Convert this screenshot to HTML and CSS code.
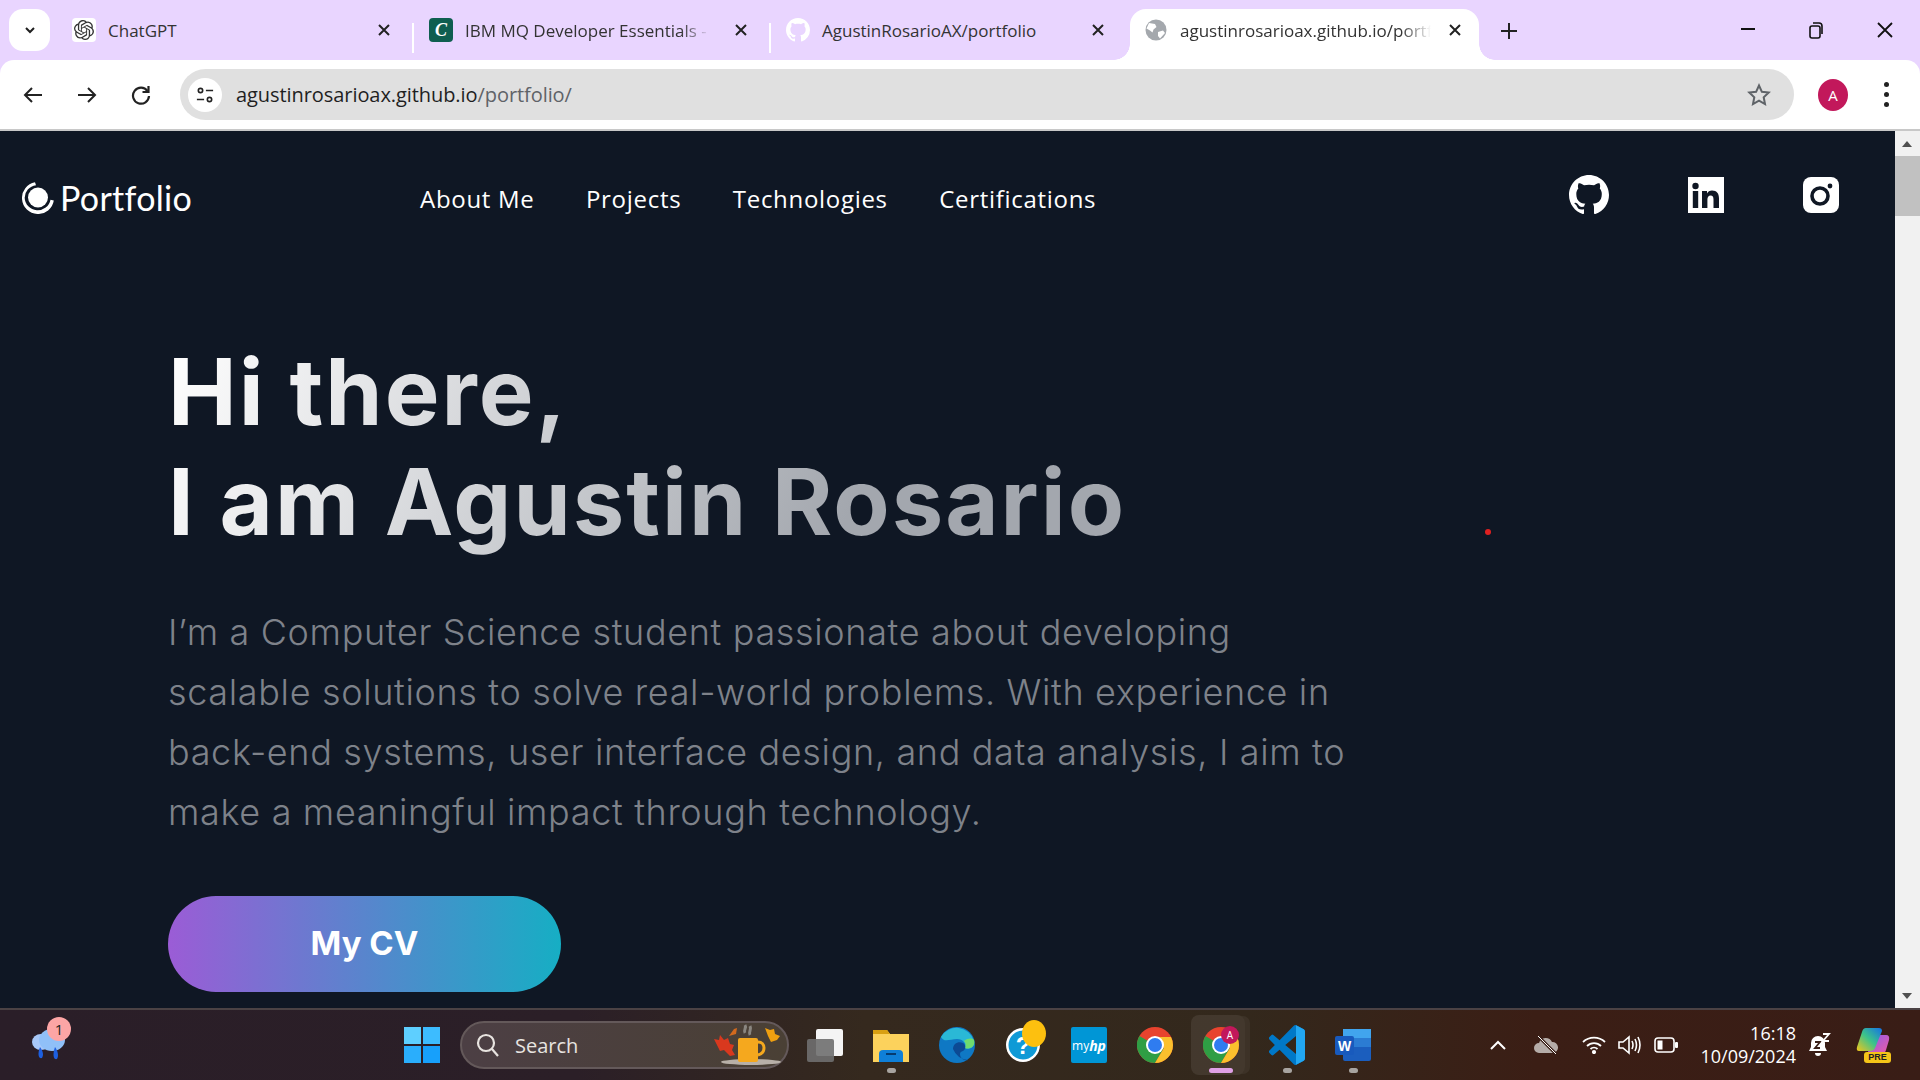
FILE: index.html
```html
<!DOCTYPE html>
<html lang="en">
<head>
<meta charset="utf-8">
<title>Portfolio</title>
<link rel="stylesheet" href="styles.css">
</head>
<body>
<div class="tabstrip">
  <button class="collapse"><svg width="14" height="14" viewBox="0 0 14 14"><path d="M3 5l4 4 4-4" fill="none" stroke="#1f1f1f" stroke-width="2"/></svg></button>
  <div class="tab t1">
    <span class="fav white"><svg width="20" height="20" viewBox="0 0 24 24" fill="#333"><path d="M22.2819 9.8211a5.9847 5.9847 0 0 0-.5157-4.9108 6.0462 6.0462 0 0 0-6.5098-2.9A6.0651 6.0651 0 0 0 4.9807 4.1818a5.9847 5.9847 0 0 0-3.9977 2.9 6.0462 6.0462 0 0 0 .7427 7.0966 5.98 5.98 0 0 0 .511 4.9107 6.051 6.051 0 0 0 6.5146 2.9001A5.9847 5.9847 0 0 0 13.2599 24a6.0557 6.0557 0 0 0 5.7718-4.2058 5.9894 5.9894 0 0 0 3.9977-2.9001 6.0557 6.0557 0 0 0-.7475-7.0729zm-9.022 12.6081a4.4755 4.4755 0 0 1-2.8764-1.0408l.1419-.0804 4.7783-2.7582a.7948.7948 0 0 0 .3927-.6813v-6.7369l2.02 1.1686a.071.071 0 0 1 .038.052v5.5826a4.504 4.504 0 0 1-4.4945 4.4944zm-9.6607-4.1254a4.4708 4.4708 0 0 1-.5346-3.0137l.142.0852 4.783 2.7582a.7712.7712 0 0 0 .7806 0l5.8428-3.3685v2.3324a.0804.0804 0 0 1-.0332.0615L9.74 19.9502a4.4992 4.4992 0 0 1-6.1408-1.6464zM2.3408 7.8956a4.485 4.485 0 0 1 2.3655-1.9728V11.6a.7664.7664 0 0 0 .3879.6765l5.8144 3.3543-2.0201 1.1685a.0757.0757 0 0 1-.071 0l-4.8303-2.7865A4.504 4.504 0 0 1 2.3408 7.872zm16.5963 3.8558L13.1038 8.364 15.1192 7.2a.0757.0757 0 0 1 .071 0l4.8303 2.7913a4.4944 4.4944 0 0 1-.6765 8.1042v-5.6772a.79.79 0 0 0-.407-.667zm2.0107-3.0231l-.142-.0852-4.7735-2.7818a.7759.7759 0 0 0-.7854 0L9.409 9.2297V6.8974a.0662.0662 0 0 1 .0284-.0615l4.8303-2.7866a4.4992 4.4992 0 0 1 6.6802 4.66zM8.3065 12.863l-2.02-1.1638a.0804.0804 0 0 1-.038-.0567V6.0742a4.4992 4.4992 0 0 1 7.3757-3.4537l-.142.0805L8.704 5.459a.7948.7948 0 0 0-.3927.6813zm1.0976-2.3654l2.602-1.4998 2.6069 1.4998v2.9994l-2.5974 1.4997-2.6067-1.4997Z"/></svg></span>
    <span class="tab-title">ChatGPT</span>
    <svg class="x" width="12" height="12" viewBox="0 0 12 12"><path d="M1 1l10 10M11 1L1 11" stroke="#222" stroke-width="2"/></svg>
  </div>
  <i class="sep"></i>
  <div class="tab t2">
    <span class="fav green"><span class="c">C</span></span>
    <span class="tab-title fade">IBM MQ Developer Essentials -</span>
    <svg class="x" width="12" height="12" viewBox="0 0 12 12"><path d="M1 1l10 10M11 1L1 11" stroke="#222" stroke-width="2"/></svg>
  </div>
  <i class="sep"></i>
  <div class="tab t3">
    <svg class="fav" width="24" height="24" viewBox="0 0 16 16" fill="#fff"><path d="M8 0C3.58 0 0 3.58 0 8c0 3.54 2.29 6.53 5.47 7.59.4.07.55-.17.55-.38 0-.19-.01-.82-.01-1.49-2.01.37-2.53-.49-2.69-.94-.09-.23-.48-.94-.82-1.13-.28-.15-.68-.52-.01-.53.63-.01 1.08.58 1.23.82.72 1.21 1.87.87 2.33.66.07-.52.28-.87.51-1.07-1.78-.2-3.64-.89-3.64-3.95 0-.87.31-1.59.82-2.15-.08-.2-.36-1.02.08-2.12 0 0 .67-.21 2.2.82.64-.18 1.32-.27 2-.27s1.36.09 2 .27c1.53-1.04 2.2-.82 2.2-.82.44 1.1.16 1.92.08 2.12.51.56.82 1.27.82 2.15 0 3.07-1.87 3.75-3.65 3.95.29.25.54.73.54 1.48 0 1.07-.01 1.93-.01 2.2 0 .21.15.46.55.38A8.01 8.01 0 0 0 16 8c0-4.42-3.58-8-8-8z"/></svg>
    <span class="tab-title">AgustinRosarioAX/portfolio</span>
    <svg class="x" width="12" height="12" viewBox="0 0 12 12"><path d="M1 1l10 10M11 1L1 11" stroke="#222" stroke-width="2"/></svg>
  </div>
  <div class="tab active">
    <svg class="fav" width="24" height="24" viewBox="0 0 24 24"><circle cx="12" cy="12" r="10.5" fill="#a4a8ad"/><path d="M5 5l6 1 1.500 3-3 2.500-1 3-2.500-2-3.500-2zM14 14l5-1.500 2 2.500-5 5.500-2-2.500z" fill="#fff"/></svg>
    <span class="tab-title fade-w">agustinrosarioax.github.io/portf</span>
    <svg class="x" width="12" height="12" viewBox="0 0 12 12"><path d="M1 1l10 10M11 1L1 11" stroke="#222" stroke-width="2"/></svg>
  </div>
  <svg class="plus" width="16" height="16" viewBox="0 0 16 16"><path d="M8 0v16M0 8h16" stroke="#222" stroke-width="2"/></svg>
  <div class="winctl">
    <svg width="16" height="16" viewBox="0 0 16 16"><path d="M1 7h14" stroke="#111" stroke-width="2"/></svg>
    <svg width="16" height="18" viewBox="0 0 16 18" fill="none" stroke="#111" stroke-width="1.600"><rect x="2" y="5" width="10" height="12" rx="2"/><path d="M5 2h6a3 3 0 0 1 3 3v8"/></svg>
    <svg width="18" height="18" viewBox="0 0 18 18"><path d="M2 2l14 14M16 2L2 16" stroke="#111" stroke-width="1.800"/></svg>
  </div>
</div>
<div class="toolbar">
  <svg class="nav-ic" width="20" height="20" viewBox="0 0 20 20" fill="none" stroke="#222" stroke-width="2"><path d="M19 10H2M9 3l-7 7 7 7"/></svg>
  <svg class="nav-ic" width="20" height="20" viewBox="0 0 20 20" fill="none" stroke="#222" stroke-width="2"><path d="M1 10h17M11 3l7 7-7 7"/></svg>
  <svg class="nav-ic" width="20" height="20" viewBox="0 0 20 20" fill="none" stroke="#222" stroke-width="2.200"><path d="M16.500 6A8 8 0 1 0 18 11"/><path d="M17.500 1v6h-6" /></svg>
  <div class="omnibox">
    <span class="site-ic"><svg width="20" height="20" viewBox="0 0 20 20" fill="none" stroke="#222" stroke-width="1.800"><circle cx="5" cy="5" r="2.400"/><path d="M11 5h8M1 15h8"/><circle cx="15" cy="15" r="2.400"/></svg></span>
    <span class="url">agustinrosarioax.github.io<span class="url-path">/portfolio/</span></span>
    <svg class="star" width="24" height="24" viewBox="0 0 24 24" fill="none" stroke="#5f6368" stroke-width="2"><path d="M12 2.500l2.900 6.300 6.800.8-5 4.700 1.300 6.800-6-3.400-6 3.400 1.300-6.800-5-4.700 6.800-.8z"/></svg>
  </div>
  <span class="avatar">A</span>
  <span class="dots"><i></i><i></i><i></i></span>
</div>
<div class="viewport">
  <main class="page">
    <header class="topnav">
      <a class="logo">
        <svg width="32" height="32" viewBox="0 0 32 32"><path d="M13 .3A16 16 0 1 0 31.800 18.500l-3.300-.7A13 12.500 0 1 1 14 3.300z" fill="#fff"/><circle cx="16" cy="15.500" r="10" fill="#fff"/></svg>
        <span>Portfolio</span>
      </a>
      <nav class="links">
        <a>About Me</a>
        <a>Projects</a>
        <a>Technologies</a>
        <a>Certifications</a>
      </nav>
      <div class="socials">
        <svg width="40" height="40" viewBox="0 0 16 16" fill="#fff"><path d="M8 0C3.58 0 0 3.58 0 8c0 3.540 2.290 6.530 5.470 7.590.4.070.55-.17.55-.38 0-.19-.01-.82-.01-1.490-2.010.37-2.530-.49-2.690-.94-.09-.23-.48-.94-.82-1.130-.28-.15-.68-.52-.01-.53.63-.01 1.080.58 1.230.82.72 1.210 1.870.87 2.330.66.07-.52.28-.87.51-1.070-1.780-.2-3.640-.89-3.640-3.950 0-.87.31-1.590.82-2.150-.08-.2-.36-1.020.08-2.120 0 0 .67-.21 2.200.82.64-.18 1.320-.27 2-.27s1.360.09 2 .27c1.530-1.040 2.200-.82 2.200-.82.44 1.100.16 1.920.08 2.120.51.56.82 1.270.82 2.150 0 3.070-1.870 3.750-3.650 3.950.29.25.54.73.54 1.480 0 1.070-.01 1.930-.01 2.200 0 .21.15.46.55.38A8.010 8.010 0 0 0 16 8c0-4.420-3.580-8-8-8z"/></svg>
        <svg width="36" height="36" viewBox="0 0 36 36"><rect width="36" height="36" fill="#fff"/><circle cx="7.500" cy="9" r="3.200" fill="#0f1724"/><rect x="4.800" y="14" width="5.400" height="17" fill="#0f1724"/><path d="M14 14h5v2.400c1-1.700 2.700-2.800 5-2.800 5 0 7 3 7 8v9.400h-5.500v-8.500c0-2.400-.8-4-2.900-4-2.200 0-3.200 1.700-3.200 4v8.500H14z" fill="#0f1724"/></svg>
        <svg width="36" height="36" viewBox="0 0 36 36"><rect width="36" height="36" rx="8" fill="#fff"/><circle cx="17" cy="19" r="8" fill="none" stroke="#0f1724" stroke-width="3.600"/><circle cx="27" cy="9" r="2.400" fill="#0f1724"/></svg>
      </div>
    </header>
    <section class="hero">
      <h1 class="title">Hi there,<br>I am Agustin Rosario</h1>
      <p class="lead">I’m a Computer Science student passionate about developing scalable solutions to solve real-world problems. With experience in back-end systems, user interface design, and data analysis, I aim to make a meaningful impact through technology.</p>
      <a class="cv">My CV</a>
    </section>
    <i class="red-dot"></i>
  </main>
  <aside class="scrollbar">
    <span class="arrow up"></span>
    <span class="thumb"></span>
    <span class="track"></span>
    <span class="arrow down"></span>
  </aside>
</div>
<footer class="taskbar">
  <div class="weather">
    <svg width="38" height="34" viewBox="0 0 38 34"><ellipse cx="11" cy="14" rx="9" ry="8" fill="#a8c8f8"/><ellipse cx="22" cy="12" rx="13" ry="11" fill="#90c0f8"/><path d="M10 19c3 4 4 8 2 11-3 1-5-3-2-11zM25 19c3 4 4 9 2 12-3 1-5-3-2-12z" fill="#1d5fe0"/></svg>
    <span class="badge">1</span>
  </div>
  <div class="center">
    <svg class="win" width="36" height="36" viewBox="0 0 36 36"><rect width="17" height="17" fill="#5ecfff"/><rect x="19" width="17" height="17" fill="#3dbcff"/><rect y="19" width="17" height="17" fill="#2aaefc"/><rect x="19" y="19" width="17" height="17" fill="#17a0fb"/></svg>
    <div class="search">
      <svg width="24" height="24" viewBox="0 0 24 24" fill="none" stroke="#e8e4e0" stroke-width="2.200"><circle cx="10" cy="10" r="8"/><path d="M16 16l6 7"/></svg>
      <span class="search-text">Search</span>
      <svg class="cup" width="68" height="44" viewBox="0 0 68 44"><ellipse cx="38" cy="39" rx="30" ry="3" fill="#b8b0a8"/><path d="M1 16l5 1 1-5 4 5 4-2 2 6 4 1-2 5 3 5-5 1-6-6-4 1z" fill="#d9381e"/><rect x="25" y="15" width="20" height="24" rx="2" fill="#f5a81e"/><path d="M45 19c8 0 8 11 0 13" fill="none" stroke="#f5a81e" stroke-width="3"/><path d="M52 5l5 2 4-1 1 5 5 2-3 4-6 2-3-6z" fill="#f0a010"/><path d="M16 13l5-7 3-1-1 6z" fill="#d2691e"/><path d="M32 2c2 3-2 5 0 8M37 3c2 4-2 6 0 9" stroke="#8a8680" stroke-width="3" fill="none"/></svg>
    </div>
    <div class="apps">
      <span class="app"><svg width="36" height="34" viewBox="0 0 36 34"><rect x="9" y="1" width="27" height="27" rx="2" fill="#f4f4f4"/><rect y="11" width="27" height="23" rx="2" fill="#6f6f6f" fill-opacity=".9"/></svg></span>
      <span class="app running"><svg width="36" height="34" viewBox="0 0 36 34"><path d="M0 2h14l3 4h19v28H0z" fill="#fcd25c"/><path d="M0 2h14l3 4H0z" fill="#d9a012"/><path d="M6 26q0-4 4-4h16q4 0 4 4v8H6z" fill="#0f7fd8"/><path d="M13 26h10" stroke="#063b70" stroke-width="2"/></svg></span>
      <span class="app"><svg width="36" height="40" viewBox="0 0 36 40"><circle cx="18" cy="20" r="18" fill="#0f78c4"/><path d="M2 12A18 18 0 0 1 35 16c1 7-5 9-9 7 2-4-2-9-8-9-7 0-13 4-16-2z" fill="#2ab8d6"/><path d="M35 15c2 7-5 10-9 8 1-3 1-5-1-7 4-3 8-3 10-1z" fill="#6fdc6f"/><path d="M14 24c0-5 5-8 10-6 3 2 3 6 0 8-2 1-3 1-3 3 0 4 4 7 8 6A18 18 0 0 1 14 24z" fill="#0c4a94"/></svg></span>
      <span class="app help"><svg width="36" height="36" viewBox="0 0 36 36"><circle cx="18" cy="18" r="17" fill="#fff"/><circle cx="18" cy="18" r="14.500" fill="#0f9ad6"/><text class="help-q" x="18" y="27" text-anchor="middle">?</text></svg><i class="help-dot"></i></span>
      <span class="app"><span class="hp">my<b>hp</b></span></span>
      <span class="app"><svg width="36" height="40" viewBox="0 -2 36 40"><use href="#chrome"/></svg></span>
      <span class="app active-app"><svg width="36" height="40" viewBox="0 -2 36 40"><use href="#chrome"/></svg><i class="prof">A</i></span>
      <span class="app running"><svg width="36" height="40" viewBox="0 0 24 24" preserveAspectRatio="none"><path d="M23.150 2.587L18.210.21a1.494 1.494 0 0 0-1.705.29l-9.460 8.630-4.120-3.128a.999.999 0 0 0-1.276.057L.327 7.261A1 1 0 0 0 .326 8.740L3.899 12 .326 15.260a1 1 0 0 0 .001 1.479L1.650 17.940a.999.999 0 0 0 1.276.057l4.120-3.128 9.460 8.630a1.492 1.492 0 0 0 1.704.29l4.942-2.377A1.500 1.500 0 0 0 24 20.060V3.939a1.500 1.500 0 0 0-.85-1.352zm-5.146 14.861L10.826 12l7.178-5.448v10.896z" fill="#0078c8"/><path d="M18 .1l5.150 2.487A1.500 1.500 0 0 1 24 3.939V20.060a1.500 1.500 0 0 1-.85 1.352L18 23.900z" fill="#22a7f2"/></svg></span>
      <span class="app running"><svg width="36" height="36" viewBox="0 0 36 36"><rect x="8" y="2" width="28" height="32" rx="2" fill="#1b5ebe"/><rect x="8" y="2" width="28" height="9" fill="#41a5ee"/><rect x="8" y="11" width="28" height="9" fill="#2b7cd3"/><rect x="0" y="9" width="19" height="19" rx="2" fill="#185abd"/><text class="word-w" x="9.500" y="24" text-anchor="middle">W</text></svg></span>
    </div>
  </div>
  <div class="tray">
    <svg width="16" height="10" viewBox="0 0 16 10" fill="none" stroke="#fff" stroke-width="2"><path d="M1 9l7-7 7 7"/></svg>
    <svg class="cloud" width="24" height="20" viewBox="0 0 24 20"><path d="M5 18a5 5 0 0 1 0-10 7 7 0 0 1 13-1 5.500 5.500 0 0 1 1 11z" fill="#b5aca8"/><path d="M4 1l18 18" stroke="#3a1f17" stroke-width="3"/><path d="M4 1l18 18" stroke="#fff" stroke-width="1"/></svg>
    <svg class="wifi" width="24" height="18" viewBox="0 0 24 18" fill="none" stroke="#fff" stroke-width="1.800"><path d="M1 6a16 16 0 0 1 22 0M5 10a10 10 0 0 1 14 0M8.500 13a5 5 0 0 1 7 0"/><circle cx="12" cy="16" r="1.200" fill="#fff"/></svg>
    <svg class="vol" width="24" height="20" viewBox="0 0 24 20" fill="none" stroke="#fff" stroke-width="1.600"><path d="M1 7h4l6-5v16l-6-5H1zM14 6q2 4 0 8M17 4q3 6 0 12M20 2q4 8 0 16"/></svg>
    <svg class="batt" width="24" height="16" viewBox="0 0 24 16"><rect x="1" y="1" width="19" height="14" rx="3" fill="none" stroke="#fff" stroke-width="1.600"/><rect x="3.500" y="3.500" width="5" height="9" fill="#fff"/><rect x="21" y="5" width="3" height="6" rx="1" fill="#fff"/></svg>
    <div class="clock"><span>16:18</span><span>10/09/2024</span></div>
    <svg class="bell" width="22" height="24" viewBox="0 0 22 24"><path d="M9 3a7 7 0 0 1 7 7v4l2 4H0l2-4v-4a7 7 0 0 1 7-7z" fill="#fff"/><path d="M6 20h6a3 3 0 0 1-6 0z" fill="#fff"/><path d="M6 9h5l-5 6h5" stroke="#3a1f17" stroke-width="1.800" fill="none"/><path d="M14 1h6l-6 7h6" stroke="#fff" stroke-width="1.800" fill="none"/></svg>
    <span class="copilot"><svg width="34" height="28" viewBox="0 0 34 28"><defs><linearGradient id="cpa" x1="0" y1="1" x2="1" y2="0"><stop offset="0" stop-color="#f5c518"/><stop offset=".5" stop-color="#3cc48a"/><stop offset="1" stop-color="#1470e8"/></linearGradient><linearGradient id="cpb" x1="0" y1="0" x2="1" y2="1"><stop offset="0" stop-color="#8a5cf0"/><stop offset="1" stop-color="#f05ca0"/></linearGradient></defs><path d="M13 8h17q4 0 3 5l-3 10q-1 4-5 4H12z" fill="url(#cpb)"/><path d="M10 1h13q3 0 3 3l-7 17q-1 3-5 3H3q-3 0-2-4L6 5q1-4 4-4z" fill="url(#cpa)"/></svg><b class="pre">PRE</b></span>
  </div>
</footer>
<svg class="defs" width="0" height="0"><defs><g id="chrome"><circle cx="18" cy="18" r="18" fill="#e8432e"/><path d="M18 18L2.400 9A18 18 0 0 0 18 36l9-15z" fill="#2f9e44"/><path d="M18 10h16a18 18 0 0 1 2 8 18 18 0 0 1-18 18l9-15z" fill="#fbc02d"/><circle cx="18" cy="18" r="9" fill="#fff"/><circle cx="18" cy="18" r="7" fill="#2f7cf0"/></g></defs></svg>
</body>
</html>
```
FILE: styles.css
```css
* { box-sizing: border-box; }
html, body { margin: 0; height: 100%; overflow: hidden; }
body { display: flex; flex-direction: column; width: 1920px; height: 1080px; background: #e9d5ff; font-family: "Open Sans", "Liberation Sans", sans-serif; }
a { color: inherit; text-decoration: none; }
i { font-style: normal; display: block; }

.tabstrip { height: 60px; flex: none; background: #e9d5ff; display: flex; align-items: flex-start; }
.collapse { width: 41px; height: 42px; margin: 9px 14px 0 9px; border: 0; padding: 0; border-radius: 14px; background: #fff; display: flex; align-items: center; justify-content: center; }
.tab { height: 51px; margin-top: 9px; display: flex; align-items: center; position: relative; padding-bottom: 9px; flex: none; }
.t1 { width: 348px; padding-left: 8px; }
.t2 { width: 355px; padding-left: 15px; }
.t3 { width: 359px; padding-left: 15px; }
.t1 .x { margin-left: auto; margin-right: 22px; }
.t2 .x { margin-left: auto; margin-right: 22px; }
.t3 .x { margin-left: auto; margin-right: 26px; }
.fav { width: 24px; height: 24px; flex: none; display: flex; align-items: center; justify-content: center; border-radius: 4px; }
.fav.white { background: #fff; }
.fav.green { background: #0f5e50; }
.c { color: #fff; font: italic 700 18px "Liberation Serif", serif; }
.tab-title { font-size: 17px; color: #333; margin-left: 12px; white-space: nowrap; }
.fade { width: 245px; -webkit-mask-image: linear-gradient(90deg, #000 88%, transparent); mask-image: linear-gradient(90deg, #000 88%, transparent); }
.fade-w { width: 251px; -webkit-mask-image: linear-gradient(90deg, #000 88%, transparent); mask-image: linear-gradient(90deg, #000 88%, transparent); }
.sep { width: 2px; height: 30px; margin-top: 23px; background: #fff; flex: none; }
.tab.active { width: 349px; height: 51px; background: #fff; border-radius: 16px 16px 0 0; padding-left: 14px; }
.tab.active::before, .tab.active::after { content: ""; position: absolute; bottom: 0; width: 16px; height: 16px; }
.tab.active::before { left: -16px; background: radial-gradient(circle at 0 0, #e9d5ff 15.500px, #fff 16px); }
.tab.active::after { right: -16px; background: radial-gradient(circle at 100% 0, #e9d5ff 15.500px, #fff 16px); }
.tab.active .x { margin-left: auto; margin-right: 18px; }
.plus { margin: 23px 0 0 22px; flex: none; }
.winctl { margin-left: auto; margin-top: 21px; width: 154px; margin-right: 26px; display: flex; align-items: center; justify-content: space-between; }

.toolbar { height: 71px; flex: none; background: #fff; border-bottom: 2px solid #c8c8c8; display: flex; align-items: center; padding-left: 23px; border-radius: 14px 14px 0 0; }
.nav-ic { margin-right: 34px; flex: none; }
.omnibox { width: 1614px; height: 51px; margin-left: -5px; border-radius: 26px; background: #e0e0e0; display: flex; align-items: center; padding: 0 23px 0 8px; flex: none; }
.site-ic { width: 34px; height: 34px; border-radius: 50%; background: #fff; display: flex; align-items: center; justify-content: center; }
.site-ic svg { width: 18px; height: 18px; }
.url { margin-left: 14px; font-size: 20px; letter-spacing: -.07px; color: #1f1f1f; }
.url-path { color: #5f6368; }
.star { margin-left: auto; }
.avatar { width: 30px; height: 32px; margin-left: 24px; border-radius: 50%; background: #c2185b; color: #fff; font-size: 15px; display: flex; align-items: center; justify-content: center; flex: none; }
.dots { margin-left: 36px; display: flex; flex-direction: column; gap: 5px; }
.dots i { width: 5px; height: 5px; border-radius: 50%; background: #222; }

.viewport { flex: 1; min-height: 0; display: flex; }
.page { flex: 1; background: #0f1724; color: #fff; position: relative; font-family: "Inter", sans-serif; overflow: hidden; }
.topnav { height: 134px; display: flex; align-items: center; padding-left: 22px; }
.logo { width: 398px; display: flex; align-items: center; gap: 6px; font-family: "Lato", sans-serif; font-size: 34px; letter-spacing: .3px; }
.logo span { margin-top: -2px; }
.links { display: flex; gap: 51.500px; font-size: 24px; letter-spacing: .7px; font-family: "Open Sans", sans-serif; }
.socials { margin-left: auto; width: 270px; margin-right: 56px; margin-top: -6px; display: flex; align-items: center; justify-content: space-between; }
.hero { padding: 72px 0 0 168px; }
.title { display: inline-block; margin: 0; font-size: 92px; line-height: 110px; font-weight: 700; letter-spacing: 2px; background: linear-gradient(115deg, #fff 0%, #a3a7ae 72%); -webkit-background-clip: text; background-clip: text; color: transparent; }
.lead { margin: 45px 0 0; width: 1190px; font-size: 36px; line-height: 60px; letter-spacing: .65px; font-weight: 300; color: #7e828a; }
.cv { display: flex; margin-top: 54px; padding-bottom: 2px; width: 393px; height: 96px; border-radius: 48px; align-items: center; justify-content: center; font-weight: 700; font-size: 33px; background: linear-gradient(90deg, #9b5cd6, #16aec4); }
.red-dot { position: absolute; left: 1485px; top: 398px; width: 6px; height: 6px; border-radius: 50%; background: #e02020; }

.scrollbar { width: 25px; flex: none; background: #f1f1f1; display: flex; flex-direction: column; }
.arrow { height: 25px; flex: none; position: relative; }
.arrow::after { content: ""; position: absolute; left: 7px; border-left: 5.500px solid transparent; border-right: 5.500px solid transparent; }
.arrow.up::after { top: 10px; border-bottom: 6px solid #505050; }
.arrow.down::after { top: 10px; border-top: 6px solid #505050; }
.thumb { height: 60px; background: #c1c1c1; flex: none; }
.track { flex: 1; }

.taskbar { height: 72px; flex: none; border-top: 2px solid #4b4244; background: linear-gradient(90deg, #2a1e28 0%, #2b1f27 30%, #35291e 45%, #33281c 65%, #3b1e15 80%, #391d16 100%); display: flex; align-items: center; position: relative; color: #fff; }
.weather { width: 38px; height: 34px; margin-left: 30px; position: relative; flex: none; }
.badge { position: absolute; left: 17px; top: -11px; width: 24px; height: 24px; border-radius: 50%; background: #fca5a5; color: #222; font-size: 15px; display: flex; align-items: center; justify-content: center; }
.center { display: flex; align-items: center; margin-left: 336px; flex: none; }
.search { width: 329px; height: 48px; margin-left: 20px; border-radius: 24px; background: linear-gradient(90deg, #4c3f44, #4a4035); border: 2px solid #64595a; display: flex; align-items: center; padding-left: 14px; position: relative; flex: none; }
.search-text { font-size: 20px; color: #e8e4e0; margin-left: 15px; }
.cup { position: absolute; right: 6px; top: 0; }
.apps { display: flex; align-items: center; margin-left: 3px; }
.app { width: 66px; height: 60px; display: flex; align-items: center; justify-content: center; position: relative; flex: none; }
.app.running::after { content: ""; position: absolute; bottom: 2px; left: 29px; width: 9px; height: 5px; border-radius: 3px; background: #a8a4a0; }
.active-app { background: rgba(255,255,255,.08); border-radius: 8px; box-shadow: 6px 0 0 -1px rgba(255,255,255,.05); width: 54px; margin: 0 9px 0 3px; padding-left: 6px; }
.active-app::after { content: ""; position: absolute; bottom: 2px; left: 18px; width: 24px; height: 5px; border-radius: 3px; background: #dfa0e6; }
.help-dot { position: absolute; left: 32px; top: 5px; width: 24px; height: 27px; border-radius: 50%; background: #fdc00f; }
.help-q { font: 700 24px "Liberation Sans", sans-serif; fill: #fff; }
.hp { width: 36px; height: 36px; border-radius: 2px; background: #0096d6; color: #fff; font-size: 12px; display: flex; align-items: center; justify-content: center; }
.hp b { font-style: italic; font-size: 14px; }
.prof { position: absolute; left: 30px; top: 11px; width: 18px; height: 18px; border-radius: 50%; background: #c2185b; color: #fff; font-size: 10px; display: flex; align-items: center; justify-content: center; }
.word-w { font: 700 14px "Liberation Sans", sans-serif; fill: #fff; }
.tray { margin-left: auto; margin-right: 29px; display: flex; align-items: center; }
.cloud { margin-left: 28px; }
.wifi { margin-left: 24px; }
.vol { margin-left: 12px; }
.batt { margin-left: 12px; }
.clock { width: 118px; display: flex; flex-direction: column; align-items: flex-end; font-size: 18px; line-height: 23px; font-family: "Open Sans", sans-serif; }
.bell { margin-left: 13px; }
.copilot { margin-left: 25px; width: 35px; height: 36px; position: relative; display: block; }
.pre { position: absolute; left: 8px; bottom: 0; width: 27px; height: 11px; border-radius: 3px; background: #f5c518; color: #222; font: 700 9px/11px "Liberation Sans", sans-serif; text-align: center; }
.defs { position: absolute; }
```
